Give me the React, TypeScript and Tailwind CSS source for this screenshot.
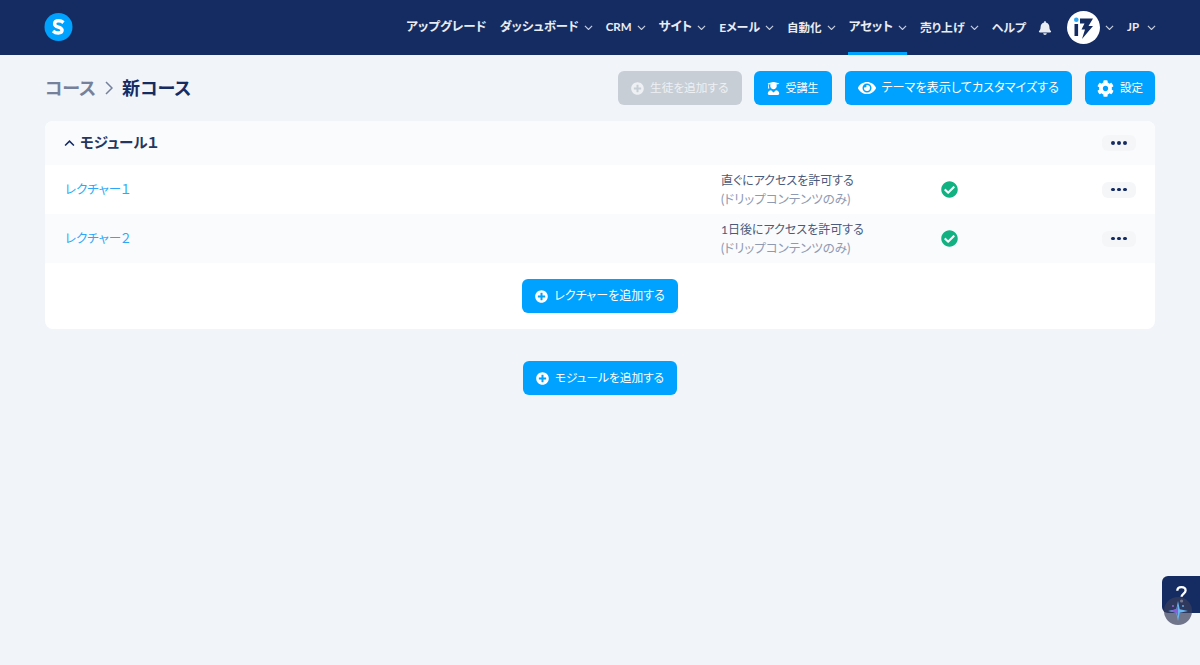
import { FaBell, FaCog, FaEye, FaPlusCircle, FaUserGraduate, FaCheckCircle } from "react-icons/fa";

function Chev({ up = false, w = 9, color = "#c6cddd", sw = 1.3 }: { up?: boolean; w?: number; color?: string; sw?: number }) {
  return (
    <svg width={w} height={w * 0.6} viewBox="0 0 10 6" className="shrink-0">
      <path d={up ? "M1 5l4-4 4 4" : "M1 1l4 4 4-4"} fill="none" stroke={color} strokeWidth={sw} />
    </svg>
  );
}

function Dots() {
  return (
    <button className="flex h-4 w-[34px] items-center justify-center gap-[2.5px] rounded-md bg-[#f5f6f8]">
      <span className="size-[3.5px] rounded-full bg-[#152c62]" />
      <span className="size-[3.5px] rounded-full bg-[#152c62]" />
      <span className="size-[3.5px] rounded-full bg-[#152c62]" />
    </button>
  );
}

function NavItem({ label, chevron = true, size = "text-[12.5px]", gap = "gap-[5px]" }: { label: string; chevron?: boolean; size?: string; gap?: string }) {
  return (
    <div className={`relative flex h-full items-center ${gap}`}>
      <span className={size}>{label}</span>
      {chevron && <Chev />}
    </div>
  );
}

function Row({ title, access, alt }: { title: string; access: string; alt?: boolean }) {
  return (
    <div className={`flex h-[49px] items-center pl-[20px] pr-[19px] ${alt ? "bg-[#fafbfd]" : "bg-white"}`}>
      <a className="w-[656px] pt-px text-[12.5px] text-[#2ba9f8]">{title}</a>
      <div className="w-[220px] leading-[19px]">
        <div className="text-[12px] text-[#4a5a7c]">{access}</div>
        <div className="text-[12.5px] text-[#8f9ab2]">(ドリップコンテンツのみ)</div>
      </div>
      <FaCheckCircle size={17} className="text-[#12b182]" />
      <div className="ml-auto">
        <Dots />
      </div>
    </div>
  );
}

function Btn({ children, className = "px-[13px] bg-[#00a2ff] text-white", size = "text-[12px]" }: { children: React.ReactNode; className?: string; size?: string }) {
  return (
    <button className={`flex h-[34px] items-center gap-[6px] rounded-md ${size} ${className}`}>
      {children}
    </button>
  );
}

export default function App() {
  return (
    <div className="relative h-[665px] w-[1200px] overflow-hidden bg-[#f1f4f9] [font-family:'Lato','Noto_Sans_CJK_JP',sans-serif] [font-feature-settings:'palt']">
      <header className="flex h-[55px] items-center bg-[#152c62] pl-[44px] pr-[44px]">
        <svg width="29" height="29" viewBox="0 0 29 29">
          <circle cx="14.5" cy="14" r="14" fill="#00a2ff" />
          <path d="M19.5 9.6C18 8.3 16.4 7.8 14.6 7.8c-2.4 0-4 1.2-4 3.1 0 4 7.5 2.4 7.5 6.2 0 1.7-1.6 2.9-3.9 2.9-1.9 0-3.7-.7-5.2-2.1" fill="none" stroke="#fff" strokeWidth="3.4" />
        </svg>
        <nav className="ml-auto flex h-full items-center gap-[13px] font-bold text-[#e9ecf2]">
          <NavItem label="アップグレード" chevron={false} />
          <NavItem label="ダッシュボード" size="text-[12.3px]" />
          <NavItem label="CRM" size="text-[11.5px] pb-[2px]" />
          <NavItem label="サイト" />
          <NavItem label="Eメール" size="text-[12px]" />
          <NavItem label="自動化" size="text-[11.5px]" />
          <NavItem label="アセット" />
          <NavItem label="売り上げ" size="text-[11.8px]" />
          <NavItem label="ヘルプ" chevron={false} size="text-[11.9px]" />
          <FaBell size={14} className="-ml-px text-[#e9ecf2]" />
          <div className="ml-[2px] flex items-center gap-[5px]">
            <svg width="33" height="33" viewBox="0 0 33 33">
              <circle cx="16.5" cy="16.5" r="16.5" fill="#fff" />
              <circle cx="9.3" cy="8.8" r="2.3" fill="#2ba9f8" />
              <path d="M7.5 13h3.6v12H7.5z" fill="#152c62" />
              <path d="M13 7.5h13l-4.5 7.5H26L15 28l3-9.5h-3.5l3-6H13z" fill="#152c62" />
            </svg>
            <Chev />
          </div>
          <NavItem label="JP" size="text-[11.5px] pb-[2px]" gap="gap-[8px]" />
        </nav>
      </header>
      <div className="absolute left-[848px] top-[52px] h-[3px] w-[59px] bg-[#00a2ff]" />

      <main className="px-[45px]">
        <div className="mt-4 flex h-[34px] items-center">
          <div className="flex items-center text-[18px] font-bold">
            <span className="text-[#75819b]">コース</span>
            <svg width="8" height="14" viewBox="0 0 8 14" className="mx-[9px]">
              <path d="M1 1l6 6-6 6" fill="none" stroke="#75819b" strokeWidth="1.5" />
            </svg>
            <span className="text-[#152c62]">新コース</span>
          </div>
          <div className="ml-auto flex">
            <Btn className="bg-[#c7ced6] px-[13px] text-[#eef0f3]" size="text-[11.7px]">
              <FaPlusCircle size={13} />
              生徒を追加する
            </Btn>
            <div className="w-3" />
            <Btn size="text-[11px]">
              <FaUserGraduate size={13} />
              受講生
            </Btn>
            <div className="w-[13px]" />
            <Btn size="text-[12.15px]">
              <FaEye size={18} />
              テーマを表示してカスタマイズする
            </Btn>
            <div className="w-[13px]" />
            <Btn className="bg-[#00a2ff] px-[12px] text-white" size="text-[11.5px]">
              <FaCog size={17} />
              設定
            </Btn>
          </div>
        </div>

        <section className="mt-4 overflow-hidden rounded-lg bg-white">
          <div className="flex h-[44px] items-center bg-[#fafbfd] pl-[19px] pr-[19px]">
            <Chev up w={11} color="#152c62" sw={1.4} />
            <span className="ml-[5px] text-[14.5px] font-bold text-[#25375f]">モジュール１</span>
            <div className="ml-auto">
              <Dots />
            </div>
          </div>
          <Row title="レクチャー１" access="直ぐにアクセスを許可する" />
          <Row title="レクチャー２" access="1日後にアクセスを許可する" alt />
          <div className="flex justify-center py-4">
            <Btn>
              <FaPlusCircle size={13} />
              レクチャーを追加する
            </Btn>
          </div>
        </section>

        <div className="mt-8 flex justify-center">
          <Btn size="text-[11.7px]">
            <FaPlusCircle size={13} />
            モジュールを追加する
          </Btn>
        </div>
      </main>

      <div className="absolute right-0 top-[576px] flex h-[37px] w-[38px] justify-center rounded-l-md bg-[#152c62] pt-[10px]">
        <svg width="11" height="18" viewBox="0 0 11 18">
          <path d="M1.3 4.8C1.3 2.5 3 1.2 5.4 1.2S9.6 2.6 9.6 4.6c0 2.7-4 3.2-4 6.2" fill="none" stroke="#fff" strokeWidth="2.3" />
          <circle cx="5.6" cy="15" r="1.6" fill="#fff" />
        </svg>
      </div>
      <div className="absolute left-[1164px] top-[597px] flex size-7 items-center justify-center rounded-full bg-[#3a3f5c]/70">
        <svg width="24" height="24" viewBox="0 0 24 24">
          <path d="M12 2l1.7 8.3L22 12l-8.3 1.7L12 22l-1.7-8.3L2 12l8.3-1.7z" fill="#6ab6f0" />
          <path d="M12 6l-1.7 4.3L4 12l6.3 1.7L12 18z" fill="#8a5fd6" />
          <circle cx="7" cy="7" r="0.9" fill="#a36be0" />
          <circle cx="17" cy="7" r="0.9" fill="#6ab6f0" />
        </svg>
      </div>
    </div>
  );
}
